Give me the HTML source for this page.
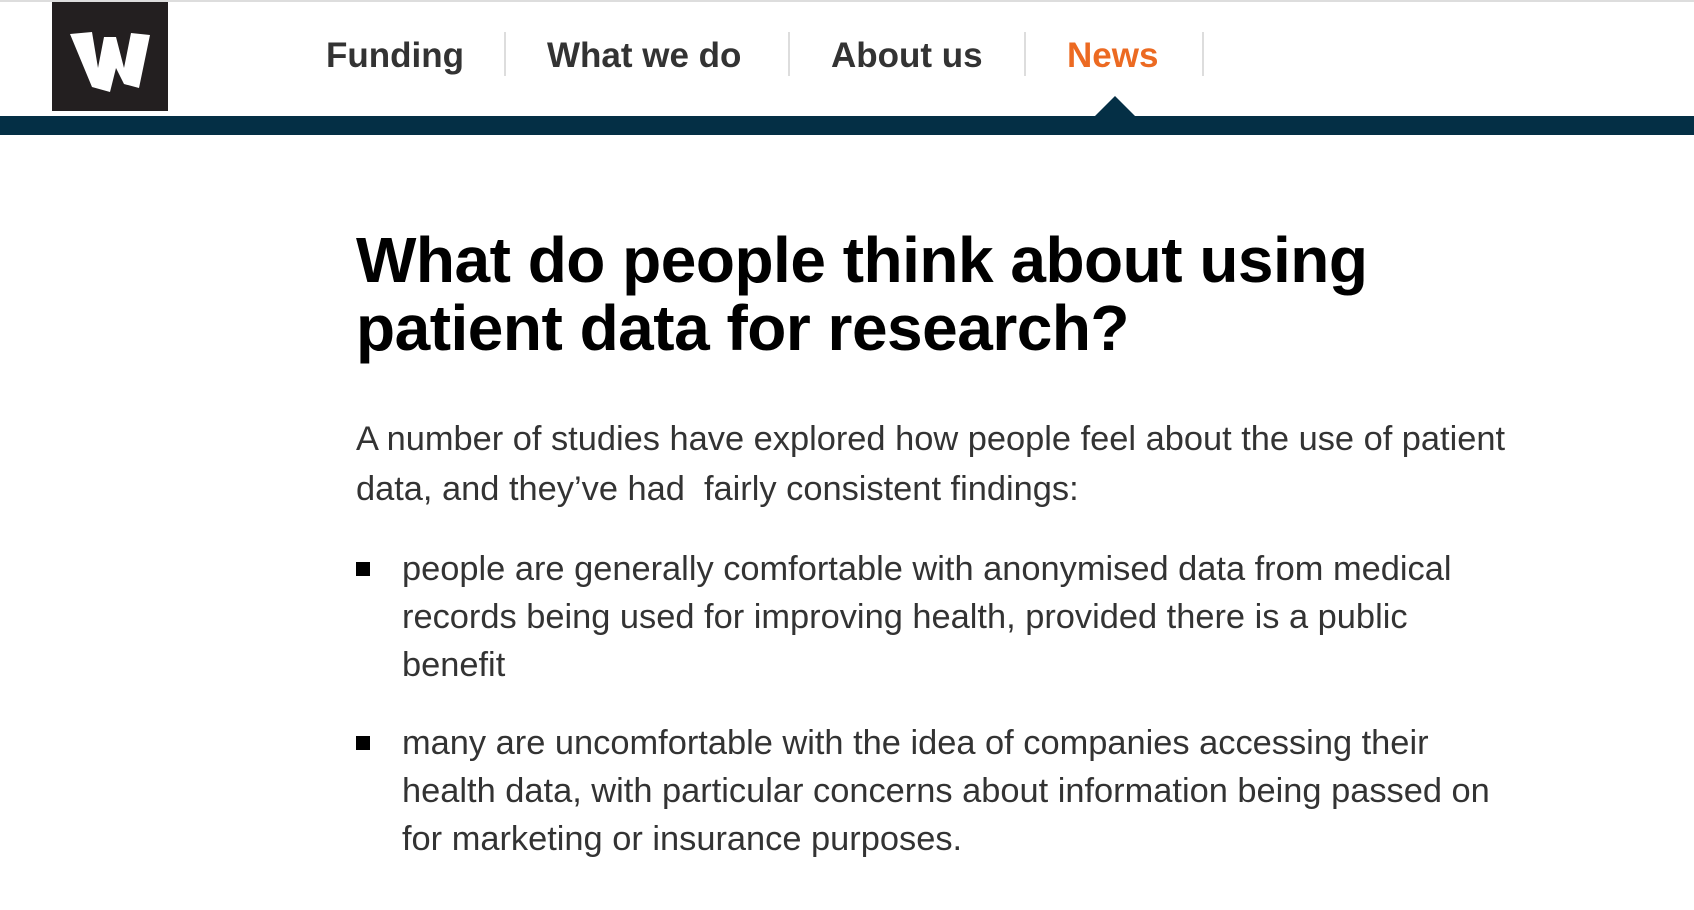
<!DOCTYPE html>
<html><head><meta charset="utf-8"><style>
body{margin:0;width:1694px;height:910px;background:#fff;font-family:"Liberation Sans",Arial,sans-serif;overflow:hidden;position:relative}
.topline{position:absolute;left:0;top:0;width:1694px;height:2px;background:#ddd}
.logo{position:absolute;left:52px;top:2px;width:116px;height:109px;background:#231f20}
.bar{position:absolute;left:0;top:116px;width:1694px;height:19px;background:#042f45}
.tri{position:absolute;left:1094px;top:96px;width:0;height:0;border-left:21px solid transparent;border-right:21px solid transparent;border-bottom:21px solid #042f45}
.nav{position:absolute;top:34px;font-weight:bold;font-size:35px;color:#333;line-height:44px}
.sep{position:absolute;top:32px;width:2px;height:44px;background:#ddd}
h1{position:absolute;left:356px;top:226px;margin:0;font-size:64px;line-height:68px;font-weight:bold;color:#000;letter-spacing:-0.5px;white-space:nowrap}
.p{position:absolute;left:356px;top:414px;font-size:34.4px;line-height:50px;color:#333;white-space:nowrap}
.li{position:absolute;left:402px;font-size:34.4px;line-height:48px;color:#333;white-space:nowrap}
.sq{position:absolute;left:356px;width:14px;height:14px;background:#000}
</style></head><body>
<div class="topline"></div>
<div class="logo"><svg width="116" height="109" viewBox="0 0 116 109"><path d="M18 32 L40 30 L46 66 L52 35 L64 35 L72 66 L79 31 L98 33 L87 86 L72 82 L64 66 L58 90 L40 85 Z" fill="#fff"/></svg></div>
<div class="nav" style="left:326px">Funding</div>
<div class="sep" style="left:504px"></div>
<div class="nav" style="left:547px">What we do</div>
<div class="sep" style="left:788px"></div>
<div class="nav" style="left:831px">About us</div>
<div class="sep" style="left:1024px"></div>
<div class="nav" style="left:1067px;color:#ec6a22">News</div>
<div class="sep" style="left:1202px"></div>
<div class="tri"></div>
<div class="bar"></div>
<h1>What do people think about using<br>patient data for research?</h1>
<div class="p">A number of studies have explored how people feel about the use of patient<br>data, and they’ve had&nbsp; fairly consistent findings:</div>
<div class="sq" style="top:562px"></div>
<div class="li" style="top:545px">people are generally comfortable with anonymised data from medical<br>records being used for improving health, provided there is a public<br>benefit</div>
<div class="sq" style="top:736px"></div>
<div class="li" style="top:719px">many are uncomfortable with the idea of companies accessing their<br>health data, with particular concerns about information being passed on<br>for marketing or insurance purposes.</div>
</body></html>
